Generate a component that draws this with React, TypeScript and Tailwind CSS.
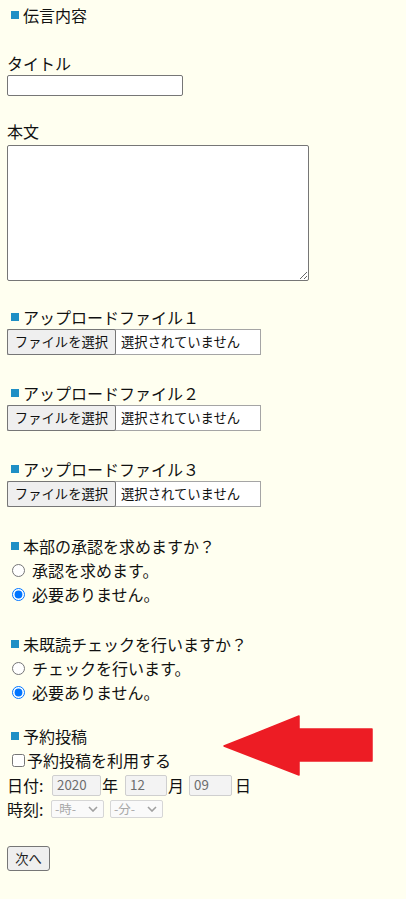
import React from 'react';

const font = { fontFamily: '"Noto Sans CJK JP", "Noto Sans", sans-serif' };

function Heading({ children, className = '' }: { children: React.ReactNode; className?: string }) {
  return (
    <div className={`flex items-center h-6 leading-6 ${className}`}>
      <span className="inline-block w-2 h-2 ml-[4px] mr-[4px] bg-[#1f8fc5]"></span>
      <span>{children}</span>
    </div>
  );
}

function FileBox({ className = '' }: { className?: string }) {
  return (
    <div className={`flex items-center w-[254px] h-[26px] bg-white border border-[#a5a5a5] ${className}`}>
      <span className="-ml-px w-[109px] h-[26px] shrink-0 flex items-center justify-center bg-[#efefef] border border-[#767676] rounded-[2px] text-[13.33px] leading-none">
        ファイルを選択
      </span>
      <span className="ml-[5px] text-[13.33px] leading-none">選択されていません</span>
    </div>
  );
}

function Radio({ label, checked, name }: { label: string; checked?: boolean; name: string }) {
  return (
    <label className="flex items-center h-6 leading-6">
      <input type="radio" name={name} defaultChecked={checked} className="ml-[5px] w-[13px] h-[13px] accent-[#0075ff]" />
      <span className="ml-[7px]">{label}</span>
    </label>
  );
}

function Sel({ label, className = '' }: { label: string; className?: string }) {
  return (
    <span className={`inline-flex items-center justify-between w-[53px] h-[18px] px-[3px] bg-[#fafafa] border border-[#d6d6d6] rounded-[2px] text-[12.5px] leading-none text-[#a8a8a8] ${className}`}>
      <span>{label}</span>
      <svg width="10" height="6" viewBox="0 0 10 6" className="mr-[2px]">
        <path d="M1 1 L5 5 L9 1" fill="none" stroke="#a0a0a0" strokeWidth="1.6" />
      </svg>
    </span>
  );
}

export default function App() {
  return (
    <div className="relative min-h-screen bg-[#fffff0] text-[#111] text-[16px] pl-[7px] pt-[3px]" style={font}>
      <Heading>伝言内容</Heading>

      <div className="mt-6 h-6 leading-6">タイトル</div>
      <input type="text" className="block w-[176px] h-[21px] bg-white border border-[#767676] rounded-[2px]" />

      <div className="mt-[23px] h-6 leading-6">本文</div>
      <textarea className="block mt-[2px] w-[302px] h-[136px] bg-white border border-[#767676] rounded-[2px] resize"></textarea>

      <Heading className="mt-6">アップロードファイル１</Heading>
      <FileBox />
      <Heading className="mt-[26px]">アップロードファイル２</Heading>
      <FileBox />
      <Heading className="mt-[26px]">アップロードファイル３</Heading>
      <FileBox />

      <Heading className="mt-[27px]">本部の承認を求めますか？</Heading>
      <Radio name="approve" label="承認を求めます。" />
      <Radio name="approve" label="必要ありません。" checked />

      <Heading className="mt-[26px]">未既読チェックを行いますか？</Heading>
      <Radio name="check" label="チェックを行います。" />
      <Radio name="check" label="必要ありません。" checked />

      <Heading className="mt-5">予約投稿</Heading>
      <label className="flex items-center h-6 leading-6">
        <input type="checkbox" className="ml-[5px] w-[13px] h-[13px]" />
        <span className="ml-[2px]">予約投稿を利用する</span>
      </label>
      <div className="flex items-center h-6 mt-px leading-6">
        <span className="w-[45px] shrink-0">日付:</span>
        <span className="inline-flex items-center w-[49px] h-[21px] pl-[4px] bg-[#f3f3f3] border border-[#cfcfcf] rounded-[2px] text-[13.33px] leading-none text-[#6d6d6d]">2020</span>
        <span className="ml-px">年</span>
        <span className="ml-[7px] inline-flex items-center w-[42px] h-[21px] pl-[4px] bg-[#f3f3f3] border border-[#cfcfcf] rounded-[2px] text-[13.33px] leading-none text-[#6d6d6d]">12</span>
        <span className="ml-px">月</span>
        <span className="ml-[5px] inline-flex items-center w-[43px] h-[21px] pl-[4px] bg-[#f3f3f3] border border-[#cfcfcf] rounded-[2px] text-[13.33px] leading-none text-[#6d6d6d]">09</span>
        <span className="ml-[3px]">日</span>
      </div>
      <div className="flex items-center h-6 leading-6">
        <span className="w-[44px] shrink-0">時刻:</span>
        <Sel label="-時-" />
        <Sel label="-分-" className="ml-[6px]" />
      </div>

      <button className="mt-[25px] w-[43px] h-[25px] flex items-center justify-center bg-[#efefef] border border-[#767676] rounded-[3px] text-[13.33px] leading-none text-[#222]">
        次へ
      </button>

      <svg className="absolute left-[223px] top-[715px]" width="151" height="62" viewBox="0 0 151 62">
        <polygon
          points="1,31 76,1 76,14 149,14 149,46 76,46 76,60"
          fill="#ed1c24"
          stroke="#ed1c24"
          strokeWidth="1.5"
          strokeLinejoin="round"
        />
      </svg>
    </div>
  );
}
